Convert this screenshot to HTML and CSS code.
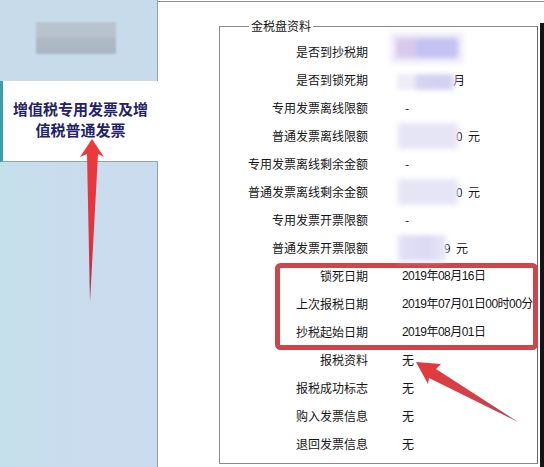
FILE: index.html
```html
<!DOCTYPE html>
<html lang="zh-CN">
<head>
<meta charset="utf-8">
<title>金税盘资料</title>
<link rel="stylesheet" href="styles.css">
</head>
<body>
<div class="page">
  <aside class="sidebar">
    <div class="side-top"><div class="side-logo"></div></div>
    <div class="tab">增值税专用发票及增值税普通发票</div>
    <div class="side-rest"></div>
  </aside>
  <main class="main">
    <div class="content">
      <fieldset class="info">
        <legend>金税盘资料</legend>
        <div class="row"><span class="label">是否到抄税期</span><span class="value"><span class="blur b1"><i class="b1a"></i><i class="b1b"></i></span></span></div>
        <div class="row"><span class="label">是否到锁死期</span><span class="value"><span class="blur b2"></span><span class="tail">月</span></span></div>
        <div class="row"><span class="label">专用发票离线限额</span><span class="value"><span class="dash">-</span></span></div>
        <div class="row"><span class="label">普通发票离线限额</span><span class="value"><span class="blur b3"></span><span class="tail">0&nbsp;&nbsp;元</span></span></div>
        <div class="row"><span class="label">专用发票离线剩余金额</span><span class="value"><span class="dash">-</span></span></div>
        <div class="row"><span class="label">普通发票离线剩余金额</span><span class="value"><span class="blur b3"></span><span class="tail">0&nbsp;&nbsp;元</span></span></div>
        <div class="row"><span class="label">专用发票开票限额</span><span class="value"><span class="dash">-</span></span></div>
        <div class="row"><span class="label">普通发票开票限额</span><span class="value"><span class="blur b4"></span><span class="tail">9&nbsp;&nbsp;元</span></span></div>
        <div class="row"><span class="label">锁死日期</span><span class="value date">2019年08月16日</span></div>
        <div class="row"><span class="label">上次报税日期</span><span class="value date">2019年07月01日00时00分</span></div>
        <div class="row"><span class="label">抄税起始日期</span><span class="value date">2019年08月01日</span></div>
        <div class="row"><span class="label">报税资料</span><span class="value">无</span></div>
        <div class="row"><span class="label">报税成功标志</span><span class="value">无</span></div>
        <div class="row"><span class="label">购入发票信息</span><span class="value">无</span></div>
        <div class="row"><span class="label">退回发票信息</span><span class="value">无</span></div>
      </fieldset>
    </div>
    <div class="edge"></div>
  </main>
</div>
<svg class="annot" width="544" height="467" viewBox="0 0 544 467" xmlns="http://www.w3.org/2000/svg">
  <defs>
    <linearGradient id="ga" x1="0" y1="0" x2="0" y2="1">
      <stop offset="0" stop-color="#ee3a3b"/>
      <stop offset="0.6" stop-color="#e0353e"/>
      <stop offset="1" stop-color="#9c3050"/>
    </linearGradient>
    <linearGradient id="gb" x1="0" y1="0" x2="1" y2="1">
      <stop offset="0" stop-color="#e23a3c"/>
      <stop offset="0.6" stop-color="#d2404a"/>
      <stop offset="1" stop-color="#a04658"/>
    </linearGradient>
  </defs>
  <rect x="277.5" y="265.5" width="258" height="82" rx="3" fill="none" stroke="#cc474b" stroke-width="5"/>
  <polygon points="92,139 80,157 87,154 90,302 98,154 104,157" fill="url(#ga)"/>
  <polygon points="416,362 441,364 436,369 518,422 429,378 428,384" fill="url(#gb)"/>
</svg>
</body>
</html>
```
FILE: styles.css
```css
html, body {
  margin: 0;
  padding: 0;
}
body {
  width: 544px;
  height: 467px;
  overflow: hidden;
  background: #ffffff;
  font-family: "Noto Sans CJK SC", "Noto Sans", sans-serif;
  position: relative;
  color: #151515;
}
.page {
  display: flex;
  height: 467px;
}
.sidebar {
  width: 158px;
  display: flex;
  flex-direction: column;
  flex: none;
}
.side-top {
  height: 81px;
  box-sizing: border-box;
  background: #c7dbea;
  border-right: 1px solid #8fa1b0;
  padding: 22px 0 0 36px;
}
.side-logo {
  width: 80px;
  height: 32px;
  background: linear-gradient(#b9c4cf 0, #b6c1cc 50%, #adb9c5 50%, #aab6c2 100%);
  filter: blur(1.2px);
}
.tab {
  height: 81px;
  box-sizing: border-box;
  background: #ffffff;
  border-left: 3px solid #3b9eb0;
  border-bottom: 1px solid #8fa3b1;
  display: flex;
  align-items: center;
  justify-content: center;
  padding: 0 6px 5px 6px;
  text-align: center;
  font-weight: bold;
  font-size: 15px;
  line-height: 21px;
  color: #24216b;
}
.side-rest {
  flex: 1;
  background: linear-gradient(90deg, #c4e0e9 0, #c7deeb 35px, #c9dcee 60px, #cadcee 100%);
  border-right: 1px solid #8fa1b0;
}
.main {
  flex: 1;
  display: flex;
  margin-top: 1px;
  border-top: 1px solid #8d8d8d;
}
.content {
  flex: 1;
  padding: 17px 2px 0 61px;
}
.info {
  margin: 0;
  padding: 5px 0 5px 0;
  border: 1px solid #8a8a8a;
  border-right-color: #6a6a6a;
}
.info legend {
  margin-left: 29px;
  padding: 0 2px;
  font-size: 12px;
  line-height: 14px;
}
.row {
  display: grid;
  grid-template-columns: 148px 1fr;
  column-gap: 34px;
  height: 28px;
  align-items: center;
  font-size: 12px;
  line-height: 14px;
}
.label {
  text-align: right;
  white-space: nowrap;
}
.value {
  display: flex;
  align-items: center;
  white-space: nowrap;
}
.date {
  font-family: "Liberation Sans", "Noto Sans CJK SC", sans-serif;
  letter-spacing: -0.55px;
}
.dash {
  padding-left: 3px;
}
.blur {
  display: inline-block;
  position: relative;
  z-index: 1;
  filter: blur(2.5px);
}
.b1 {
  display: flex;
  width: 62px;
  height: 20px;
  margin-left: -6px;
  margin-top: -8px;
  background: #ece8f8;
  box-shadow: 0 0 0 6px #f1eefa;
}
.b1 i {
  display: block;
  height: 20px;
}
.b1a {
  width: 20px;
  background: #d9c9ec;
}
.b1b {
  width: 42px;
  background: #c3c2f3;
}
.b2 {
  width: 58px;
  height: 16px;
  margin-left: -5px;
  margin-top: 4px;
  background: linear-gradient(90deg, #eeecf8 0, #eeecf8 30%, #d6d4f2 34%, #d2d0f0 90%, #e6e4f6 100%);
}
.b3 {
  width: 60px;
  height: 26px;
  margin-left: -4px;
  background: #e6e5f6;
}
.b4 {
  width: 48px;
  height: 26px;
  margin-left: -4px;
  background: linear-gradient(90deg, #e2e1f6 0, #dcdaf4 60%, #e8e7f7 100%);
}
.tail {
  margin-left: -2px;
}
.edge {
  width: 4px;
  flex: none;
  background: #151515;
  margin-top: 21px;
}
.annot {
  position: absolute;
  left: 0;
  top: 0;
  pointer-events: none;
}
```
